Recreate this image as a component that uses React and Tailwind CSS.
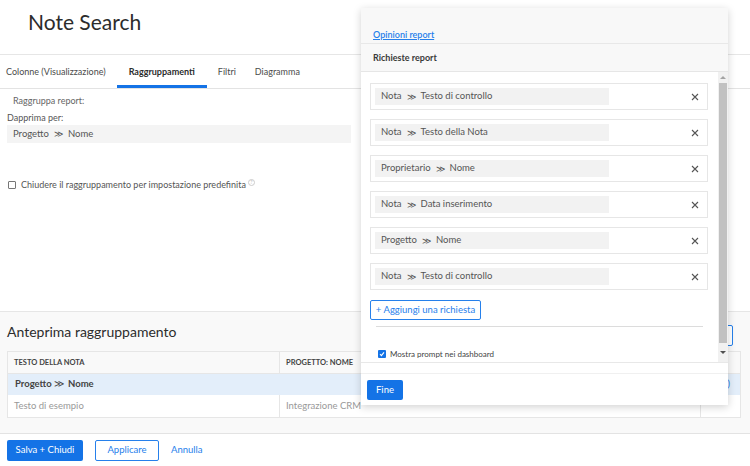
import React from 'react';

const font = { fontFamily: 'Lato, "Open Sans", sans-serif' };

const requests = [
  ['Nota', 'Testo di controllo'],
  ['Nota', 'Testo della Nota'],
  ['Proprietario', 'Nome'],
  ['Nota', 'Data inserimento'],
  ['Progetto', 'Nome'],
  ['Nota', 'Testo di controllo'],
];

const Chevron = () => <span className="mx-[5px] text-[9px]">≫</span>;

const CloseIcon = () => (
  <svg width="8" height="8" viewBox="0 0 8 8" className="text-[#555]">
    <path d="M1 1L7 7M7 1L1 7" stroke="currentColor" strokeWidth="1.1" />
  </svg>
);

const RequestCard = ({ entity, field }) => (
  <div className="flex h-[27px] items-center justify-between border border-[#e6e6e6] pl-[4px] pr-[8px]">
    <div className="flex h-[17px] w-[234px] items-center bg-[#f2f2f2] pl-[6px] text-[9.5px] text-[#555]">
      {entity}
      <Chevron />
      {field}
    </div>
    <CloseIcon />
  </div>
);

const ReportPrompts = () => (
  <div className="absolute left-[361px] top-[8px] flex h-[397px] w-[367px] flex-col bg-white shadow-[0_2px_8px_rgba(0,0,0,0.18)]">
    {/* Header */}
    <div className="h-[36px] border-b border-[#e8e8e8] bg-[#f8f8f8] pl-[12px] pt-[21px] text-[9px] leading-[12px]">
      <a className="font-semibold text-[#2680eb] underline">Opinioni report</a>
    </div>
    <div className="flex h-[28px] items-center border-b border-[#e6e6e6] bg-[#f8f8f8] pl-[12px] text-[9px] font-bold text-[#3a3a3a]">
      Richieste report
    </div>

    {/* Scrolling body */}
    <div className="flex h-[290px] overflow-hidden">
      <div className="flex-1 overflow-hidden pl-[9px] pr-[10px] pt-[11px]">
        <div className="flex flex-col gap-[9px]">
          {requests.map(([e, f], i) => (
            <RequestCard key={i} entity={e} field={f} />
          ))}
        </div>
        <button className="mt-[10px] h-[20px] w-[111px] rounded-[2px] border border-[#2680eb] text-[9.5px] text-[#2680eb]">
          + Aggiungi una richiesta
        </button>
        <div className="ml-[6px] mr-[5px] mt-[6px] border-t border-[#dcdcdc]" />
        <label className="ml-[8px] mt-[22px] flex items-center gap-[4px] text-[8px] leading-[10px] text-[#444]">
          <span className="flex h-[8px] w-[8px] items-center justify-center rounded-[1px] bg-[#1473e6]">
            <svg width="6" height="6" viewBox="0 0 6 6">
              <path d="M1 3.2L2.4 4.6L5 1.4" stroke="white" strokeWidth="1.1" fill="none" />
            </svg>
          </span>
          Mostra prompt nei dashboard
        </label>
      </div>
      {/* Fake scrollbar */}
      <div className="flex w-[10px] flex-col items-center bg-[#f1f1f1]">
        <div className="flex h-[11px] items-center">
          <div className="h-0 w-0 border-x-[3px] border-b-[3px] border-x-transparent border-b-[#a3a3a3]" />
        </div>
        <div className="h-[260px] w-[8px] bg-[#c1c1c1]" />
        <div className="flex flex-1 items-center">
          <div className="h-0 w-0 border-x-[3px] border-t-[3px] border-x-transparent border-t-[#505050]" />
        </div>
      </div>
    </div>

    {/* Footer */}
    <div className="flex-1 border-t border-[#e8e8e8]">
      <div className="h-[11px] border-b border-[#f0f0f0]" />
      <button className="ml-[6px] mt-[6px] h-[20px] w-[36px] rounded-[2px] bg-[#1473e6] text-[9.5px] text-white">
        Fine
      </button>
    </div>
  </div>
);

export default function App() {
  return (
    <div style={font} className="relative h-[466px] w-[750px] overflow-hidden bg-white text-[#333]">
      {/* Title */}
      <div className="h-[55px] border-b border-[#e6e6e6] pl-[28px] pt-[8px]">
        <h1 className="text-[21px] leading-[28px] text-[#2c2c2c]">Note Search</h1>
      </div>

      {/* Tabs */}
      <div className="flex h-[34px] border-b border-[#e3e3e3] text-[9px] text-[#4b4b4b]">
        <div className="flex items-center pl-[6px] pr-[11px]">Colonne (Visualizzazione)</div>
        <div className="flex items-center border-b-[3px] border-[#1473e6] px-[12px] pt-[3px] font-bold text-[#2c2c2c]">
          Raggruppamenti
        </div>
        <div className="flex items-center px-[11px]">Filtri</div>
        <div className="flex items-center px-[8px]">Diagramma</div>
      </div>

      {/* Grouping settings */}
      <div className="h-[222px] pl-[7px] pt-[6px]">
        <div className="pl-[6px] text-[9px] leading-[12px] text-[#666]">Raggruppa report:</div>
        <div className="mt-[5px] text-[9px] leading-[12px] text-[#555]">Dapprima per:</div>
        <div className="mt-[1px] flex h-[18px] w-[344px] items-center bg-[#f4f4f4] pl-[6px] text-[9.5px] text-[#555]">
          Progetto
          <Chevron />
          Nome
        </div>
        <label className="mt-[35px] flex items-center gap-[5px] pl-[1px] text-[9px] text-[#555]">
          <span className="h-[8px] w-[8px] rounded-[1px] border border-[#777]" />
          Chiudere il raggruppamento per impostazione predefinita
          <span className="-ml-[3px] -mt-[5px] flex h-[7px] w-[7px] items-center justify-center rounded-full border border-[#ccc] text-[5px] text-[#bbb]">
            ?
          </span>
        </label>
      </div>

      {/* Preview */}
      <div className="h-[122px] border-t border-[#e6e6e6] bg-[#f9f9f9] pl-[7px] pr-[9px]">
        <div className="flex h-[39px] items-center justify-between">
          <h2 className="text-[14px] text-[#2c2c2c]">Anteprima raggruppamento</h2>
          <div className="mr-[8px] mt-[8px] h-[21px] w-[34px] rounded-[2px] border border-[#2680eb] bg-white" />
        </div>
        <div className="border border-[#e6e6e6] bg-white text-[9px]">
          <div className="flex h-[22px] items-center border-b border-[#e6e6e6] bg-[#f9f9f9] text-[7.5px] font-bold text-[#444]">
            <div className="flex h-full w-[272px] items-center border-r border-[#e6e6e6] pl-[6px]">TESTO DELLA NOTA</div>
            <div className="flex h-full w-[421px] items-center border-r border-[#e6e6e6] pl-[6px]">PROGETTO: NOME</div>
          </div>
          <div className="flex h-[21px] items-center justify-between bg-[#e3eefa] pl-[7px] pr-[10px] text-[9.5px] font-bold text-[#444]">
            <span>
              Progetto<span className="mx-[2px] font-normal">≫</span> Nome
            </span>
            <span className="font-normal text-[#2680eb]">(1)</span>
          </div>
          <div className="flex h-[22px] items-center text-[9.5px] text-[#999]">
            <div className="flex h-full w-[272px] items-center border-r border-[#e6e6e6] pl-[6px]">Testo di esempio</div>
            <div className="flex h-full w-[421px] items-center border-r border-[#e6e6e6] pl-[6px]">Integrazione CRM</div>
          </div>
        </div>
      </div>

      {/* Footer */}
      <div className="flex h-[34px] items-center gap-[12px] border-t border-[#e3e3e3] pl-[7px] text-[9.5px]">
        <button className="h-[21px] w-[76px] rounded-[2px] bg-[#1473e6] text-white">Salva + Chiudi</button>
        <button className="h-[21px] w-[64px] rounded-[2px] border border-[#2680eb] text-[#2680eb]">Applicare</button>
        <a className="text-[#2680eb]">Annulla</a>
      </div>

      <ReportPrompts />
    </div>
  );
}
